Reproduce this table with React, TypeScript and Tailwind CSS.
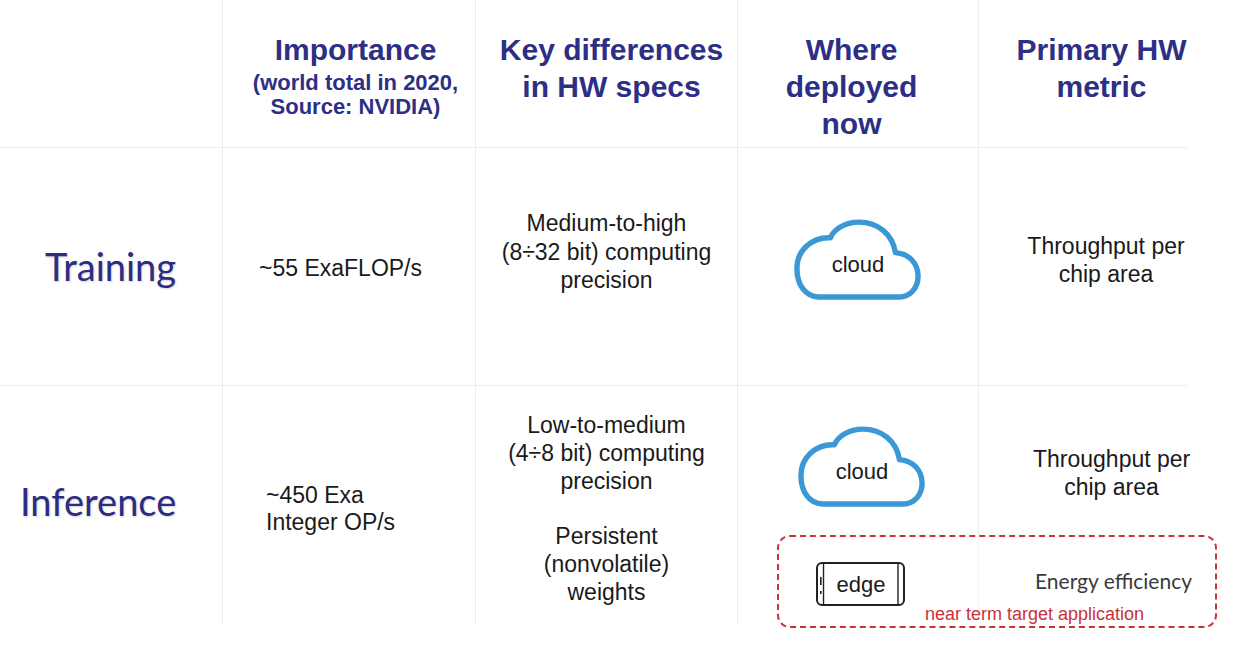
const sans = "font-['Liberation_Sans',Arial,sans-serif]";
const calibri = "font-['Lato','Open_Sans',sans-serif]";
const line = "border-[#ececec]";

function Cloud() {
  return (
    <div className="relative w-[130px] h-[83px]">
      <svg viewBox="0 0 132 84" className="absolute inset-0 w-full h-full" fill="none">
        <path
          d="M26 79 H108 C119 79 127 70 127 58 C127 45 118 35 104 34 C101 15 86 3 67 3 C52 3 41 11 38 19 C19 18 4 32 4 50 C4 67 13 79 26 79 Z"
          stroke="#3b98d5"
          strokeWidth="5.5"
          strokeLinejoin="round"
        />
      </svg>
      <div className="absolute inset-0 flex items-center justify-center pt-2 text-[22px] text-[#1a1a1a]">
        cloud
      </div>
    </div>
  );
}

function Edge() {
  return (
    <div className="relative w-[90px] h-[44px]">
      <svg viewBox="0 0 90 44" className="absolute inset-0 w-full h-full" fill="none">
        <rect x="1" y="1" width="87" height="42" rx="5" stroke="#222" strokeWidth="2" />
        <line x1="7.5" y1="2" x2="7.5" y2="42" stroke="#222" strokeWidth="1.4" />
        <line x1="82" y1="2" x2="82" y2="42" stroke="#222" strokeWidth="1.4" />
        <rect x="4" y="15" width="1.6" height="8" fill="#222" />
        <rect x="4" y="29" width="1.6" height="3" fill="#222" />
      </svg>
      <div className="absolute inset-0 flex items-center justify-center text-[22px] text-[#1a1a1a]">
        edge
      </div>
    </div>
  );
}

export default function App() {
  return (
    <div className={`relative w-[1240px] h-[649px] bg-white overflow-hidden ${sans}`}>
      <div className="grid grid-cols-[222px_253px_262px_241px_209px_53px] grid-rows-[147px_238px_240px]">
        {/* header */}
        <div />
        <div className={`border-l ${line} pt-[31px] pl-[13px] text-center font-bold text-[#2d2f86]`}>
          <div className="text-[30px] leading-[37px]">Importance</div>
          <div className="mt-[3px] text-[22px] leading-[24px]">(world total in 2020,</div>
          <div className="text-[22px] leading-[24px]">Source: NVIDIA)</div>
        </div>
        <div className={`border-l ${line} pt-[31px] pl-[10px] text-center font-bold text-[#2d2f86] text-[30px] leading-[37px]`}>
          <div>Key differences</div>
          <div>in HW specs</div>
        </div>
        <div className={`border-l ${line} pt-[31px] pr-[13px] text-center font-bold text-[#2d2f86] text-[30px] leading-[37px]`}>
          <div>Where</div>
          <div>deployed</div>
          <div>now</div>
        </div>
        <div className={`border-l ${line} pt-[31px] pl-[37px] text-center font-bold text-[#2d2f86] text-[30px] leading-[37px]`}>
          <div>Primary HW</div>
          <div>metric</div>
        </div>
        <div />

        {/* training */}
        <div className={`border-t ${line} pt-[96px] pl-[45px]`}>
          <div className={`${calibri} text-[38px] leading-[44px] text-[#2b2d84] [text-shadow:1px_1px_2px_rgba(0,0,0,0.18)]`}>
            Training
          </div>
        </div>
        <div className={`border-t border-l ${line} pt-[106px] pl-[36px] text-[23px] leading-[28px] text-[#1a1a1a]`}>
          ~55 ExaFLOP/s
        </div>
        <div className={`border-t border-l ${line} pt-[61px] text-center text-[23px] leading-[28.5px] text-[#1a1a1a]`}>
          <div>Medium-to-high</div>
          <div>(8÷32 bit) computing</div>
          <div>precision</div>
        </div>
        <div className={`border-t border-l ${line} pt-[71px] flex justify-center`}>
          <Cloud />
        </div>
        <div className={`border-t border-l ${line} pt-[84px] pl-[46px] text-center text-[23px] leading-[28px] text-[#1a1a1a] whitespace-nowrap`}>
          <div>Throughput per</div>
          <div>chip area</div>
        </div>
        <div />

        {/* inference */}
        <div className={`border-t ${line} pt-[93px] pl-[20px]`}>
          <div className={`${calibri} text-[38px] leading-[44px] text-[#2b2d84] [text-shadow:1px_1px_2px_rgba(0,0,0,0.18)]`}>
            Inference
          </div>
        </div>
        <div className={`border-t border-l ${line} pt-[96px] pl-[43px] text-[23px] leading-[27px] text-[#1a1a1a]`}>
          <div>~450 Exa</div>
          <div>Integer OP/s</div>
        </div>
        <div className={`border-t border-l ${line} pt-[25px] text-center text-[23px] leading-[28px] text-[#1a1a1a]`}>
          <div>Low-to-medium</div>
          <div>(4÷8 bit) computing</div>
          <div>precision</div>
          <div className="mt-[27px]">Persistent</div>
          <div>(nonvolatile)</div>
          <div>weights</div>
        </div>
        <div className={`border-t border-l ${line} pt-[40px] pl-[8px] flex justify-center items-start`}>
          <Cloud />
        </div>
        <div className="col-span-2 flex">
          <div className={`w-[209px] border-t border-l ${line} pt-[59px] pl-[54px] text-center text-[23px] leading-[28px] text-[#1a1a1a] whitespace-nowrap`}>
            <div className="-mr-[3px]">Throughput per</div>
            <div className="-mr-[3px]">chip area</div>
          </div>
        </div>
      </div>

      {/* near term target box */}
      <div className="absolute left-[777px] top-[535px] w-[440px] h-[93px] rounded-[13px] border-2 border-dashed border-[#c8323b] bg-white/60">
        <div className="flex items-center justify-between pl-[37px] pr-[23px] pt-[25px]">
          <Edge />
          <div className={`${calibri} mb-[7px] text-[21px] text-[#3a3a3a]`}>Energy efficiency</div>
        </div>
        <div className="pl-[146px] mt-[-2px] text-[18px] leading-[20px] text-[#c8323b]">
          near term target application
        </div>
      </div>
    </div>
  );
}
